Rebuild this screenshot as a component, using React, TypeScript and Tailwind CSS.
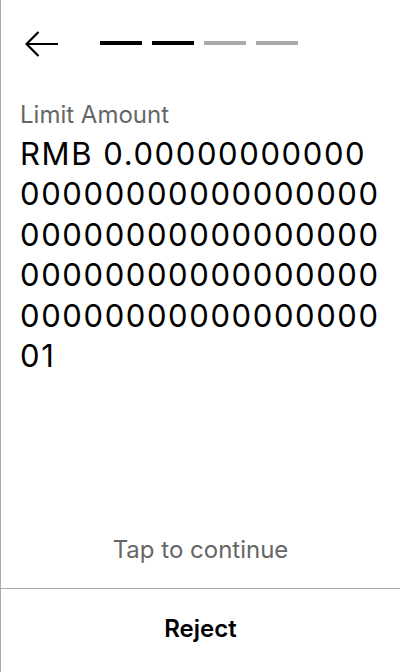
const amount = 'RMB 0.' + '0'.repeat(80) + '1';

export default function App() {
  return (
    <div className="flex h-[672px] w-[400px] flex-col border-l border-[#aaaaaa] bg-white font-['Inter',sans-serif] text-black">
      {/* Header */}
      <div className="flex h-[86px] shrink-0 items-center pl-6 pr-6">
        <svg width="34" height="28" viewBox="0 0 34 28" fill="none" className="mt-[2px]">
          <path d="M33 14H2M13.5 2L1.5 14L13.5 26" stroke="#000" strokeWidth="2.2" />
        </svg>
        <div className="ml-[41px] flex gap-[10px]">
          <div className="h-1 w-[42px] bg-black" />
          <div className="h-1 w-[42px] bg-black" />
          <div className="h-1 w-[42px] bg-[#aaaaaa]" />
          <div className="h-1 w-[42px] bg-[#aaaaaa]" />
        </div>
      </div>

      {/* Content */}
      <div className="flex-1 pl-[19px] pr-[16px] pt-[13px]">
        <p className="text-[24px] leading-[32px] text-[#666666]">Limit Amount</p>
        <p className="mt-[3px] break-all text-[31px] leading-[40.4px] tracking-[1.6px]">{amount}</p>
      </div>

      {/* Footer */}
      <div className="pb-[22px] text-center text-[24px] leading-[32px] text-[#666666]">Tap to continue</div>
      <div className="h-[84px] shrink-0 border-t border-[#aaaaaa] pt-[24px] text-center text-[24px] font-semibold leading-[32px]">
        Reject
      </div>
    </div>
  );
}
